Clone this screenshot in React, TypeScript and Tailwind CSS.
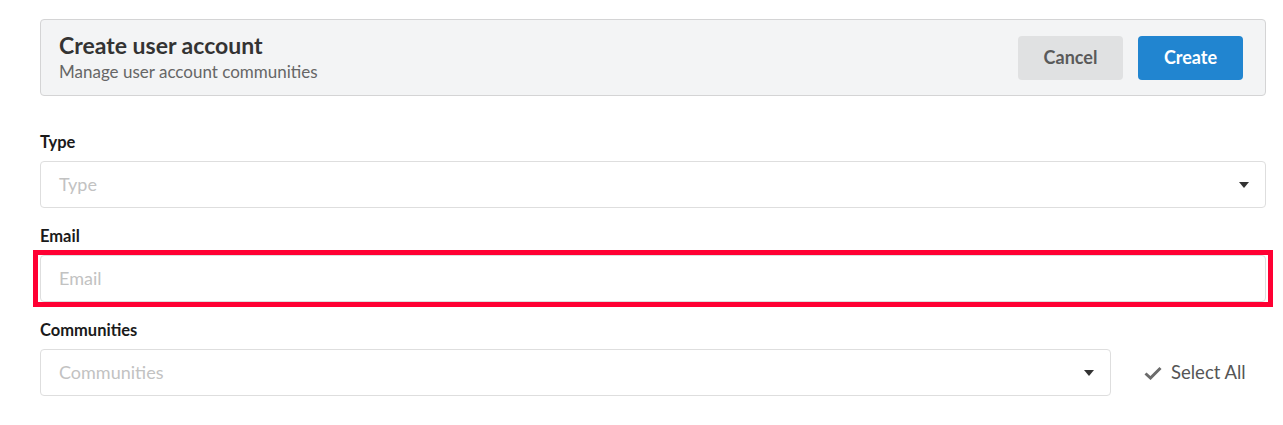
import React from 'react'

const font = { fontFamily: 'Lato, "Open Sans", Arial, sans-serif' }

const Caret = () => (
  <svg width="10" height="6" viewBox="0 0 10 6" className="shrink-0">
    <path d="M0 0 L10 0 L5 6 Z" fill="#333" />
  </svg>
)

const Field = ({
  label,
  placeholder,
  dropdown,
  highlighted,
}: {
  label: string
  placeholder: string
  dropdown?: boolean
  highlighted?: boolean
}) => (
  <div className="flex flex-col">
    <label className="text-[16.5px] leading-[20px] font-bold text-[#1a1a1a] mb-[9px]">{label}</label>
    <div className="relative">
      <div className="h-[47px] flex items-center justify-between pl-[18px] pr-[16px] bg-white border border-[#dedede] rounded-[4px]">
        <span className="text-[18px] leading-[22px] text-[#c2c2c2] -mt-[2px]">{placeholder}</span>
        {dropdown && <Caret />}
      </div>
      {highlighted && (
        <div className="absolute -inset-x-[7px] -top-[5px] -bottom-[5px] border-[5px] border-[#ff0033] pointer-events-none" />
      )}
    </div>
  </div>
)

export default function App() {
  return (
    <div className="w-[1283px] h-[425px] bg-white pl-[40px] pr-[17px] pt-[19px]" style={font}>
      <div className="h-[77px] flex items-center justify-between bg-[#f3f4f5] border border-[#d4d4d5] rounded-[4px] pl-[18px] pr-[22px]">
        <div className="flex flex-col">
          <h1 className="text-[23px] leading-[24px] font-bold text-[#333]">Create user account</h1>
          <p className="text-[17px] leading-[22px] text-[#666] mt-[4px]">Manage user account communities</p>
        </div>
        <div className="flex gap-[15px]">
          <button className="w-[105px] h-[44px] rounded-[4px] bg-[#e0e1e2] text-[#5a5a5a] text-[18px] font-bold">
            Cancel
          </button>
          <button className="w-[105px] h-[44px] rounded-[4px] bg-[#2185d0] text-white text-[18px] font-bold">
            Create
          </button>
        </div>
      </div>

      <div className="flex flex-col gap-[18px] mt-[36px]">
        <Field label="Type" placeholder="Type" dropdown />
        <Field label="Email" placeholder="Email" highlighted />
        <div className="flex flex-col">
          <label className="text-[16.5px] leading-[20px] font-bold text-[#1a1a1a] mb-[9px]">Communities</label>
          <div className="flex items-center">
            <div className="w-[1071px] h-[47px] flex items-center justify-between pl-[18px] pr-[16px] bg-white border border-[#dedede] rounded-[4px]">
              <span className="text-[18px] leading-[22px] text-[#c2c2c2] -mt-[2px]">Communities</span>
              <Caret />
            </div>
            <button className="flex items-center gap-[9px] ml-[33px] text-[18.5px] text-[#555]">
              <svg width="18" height="14" viewBox="0 0 18 14">
                <path d="M1.5 7.5 L6.5 12 L16.5 2" fill="none" stroke="#6b6b6b" strokeWidth="3" />
              </svg>
              Select All
            </button>
          </div>
        </div>
      </div>
    </div>
  )
}
